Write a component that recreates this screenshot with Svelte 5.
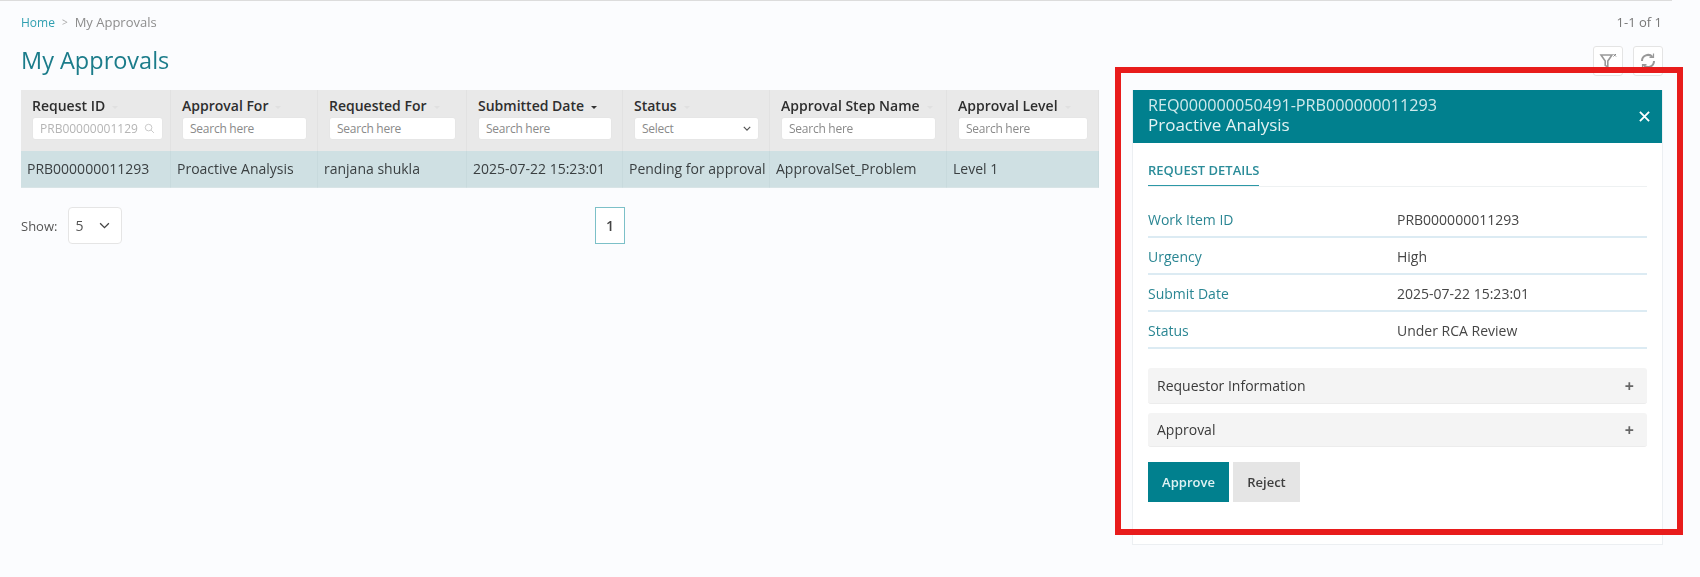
<script>
  const columns = [
    { title: 'Request ID', w: 150, value: 'PRB000000011293', kind: 'filled' },
    { title: 'Approval For', w: 147, value: 'Proactive Analysis', kind: 'search' },
    { title: 'Requested For', w: 149, value: 'ranjana shukla', kind: 'search' },
    { title: 'Submitted Date', w: 156, value: '2025-07-22 15:23:01', kind: 'search', sorted: true },
    { title: 'Status', w: 147, value: 'Pending for approval', kind: 'select' },
    { title: 'Approval Step Name', w: 177, value: 'ApprovalSet_Problem', kind: 'search' },
    { title: 'Approval Level', w: 152, value: 'Level 1', kind: 'search' }
  ];
  const details = [
    ['Work Item ID', 'PRB000000011293'],
    ['Urgency', 'High'],
    ['Submit Date', '2025-07-22 15:23:01'],
    ['Status', 'Under RCA Review']
  ];
</script>

<div class="page">
  <div class="topline"></div>
  <div class="layout">
    <main class="left">
      <nav class="crumbs"><a href="#home">Home</a><span class="sep">&gt;</span><span>My Approvals</span></nav>
      <h1>My Approvals</h1>
      <div class="table">
        {#each columns as c}
          <div class="head" style="width:{c.w}px">
            <div class="title">{c.title}<span class="caret" class:on={c.sorted}></span></div>
            {#if c.kind === 'filled'}
              <div class="field filled"><span>PRB00000001129</span>
                <svg viewBox="0 0 12 12" width="11" height="11"><circle cx="5" cy="5" r="3.6" fill="none" stroke="#c4c4c4"/><path d="M7.8 7.8 10.8 10.8" stroke="#c4c4c4"/></svg>
              </div>
            {:else if c.kind === 'select'}
              <div class="field select"><span>Select</span>
                <svg viewBox="0 0 10 6" width="8" height="5"><path d="M1 1l4 4 4-4" fill="none" stroke="#555" stroke-width="1.5"/></svg>
              </div>
            {:else}
              <div class="field"><span>Search here</span></div>
            {/if}
          </div>
        {/each}
        {#each columns as c}
          <div class="cell" style="width:{c.w}px">{c.value}</div>
        {/each}
      </div>
      <div class="foot">
        <div class="show">
          <span>Show:</span>
          <div class="size"><span>5</span>
            <svg viewBox="0 0 12 8" width="11" height="7"><path d="M1 1.5l5 5 5-5" fill="none" stroke="#444" stroke-width="1.5"/></svg>
          </div>
        </div>
        <div class="page-one">1</div>
      </div>
    </main>

    <aside class="right">
      <div class="count">1-1 of 1</div>
      <div class="tools">
        <button class="tool" aria-label="Clear filter">
          <svg viewBox="0 0 20 20" width="20" height="20"><path d="M3 4h11l-4.2 6v6l-2.6-1.6V10z" fill="none" stroke="#999" stroke-width="1.6"/><path d="M15.5 3l2.5 2.5M18 3l-2.5 2.5" stroke="#888"/></svg>
        </button>
        <button class="tool" aria-label="Refresh">
          <svg viewBox="0 0 20 20" width="20" height="20"><path d="M4 10a6 6 0 0 1 10.5-4M16 10a6 6 0 0 1-10.5 4" fill="none" stroke="#999" stroke-width="2"/><path d="M15.5 2.5v4h-4M4.5 17.5v-4h4" fill="none" stroke="#999" stroke-width="1.2"/></svg>
        </button>
      </div>
      <section class="panel">
        <header class="panel-head">
          <div class="ids">
            <div class="id-line">REQ000000050491-PRB000000011293</div>
            <div class="name-line">Proactive Analysis</div>
          </div>
          <svg class="close" viewBox="0 0 12 12" width="11" height="11"><path d="M1 1l10 10M11 1 1 11" stroke="#fff" stroke-width="2"/></svg>
        </header>
        <div class="panel-body">
          <div class="tabs"><span class="tab">REQUEST DETAILS</span></div>
          <div class="details">
            {#each details as d}
              <div class="row"><span class="k">{d[0]}</span><span class="v">{d[1]}</span></div>
            {/each}
          </div>
          <div class="acc first"><span>Requestor Information</span><b>+</b></div>
          <div class="acc second"><span>Approval</span><b>+</b></div>
          <div class="actions">
            <button class="approve">Approve</button>
            <button class="reject">Reject</button>
          </div>
        </div>
      </section>
    </aside>
  </div>
  <div class="highlight"></div>
</div>

<style>
  :global(body) { margin: 0; background: #fbfcfe; }
  .page {
    position: relative;
    width: 1700px;
    height: 577px;
    overflow: hidden;
    background: #fbfcfe;
    font-family: "Open Sans", "Noto Sans", sans-serif;
    font-size: 14px;
    color: #3b3b3b;
  }
  .topline { height: 1px; width: 1672px; background: #dcdcdc; }
  .layout { display: flex; padding-left: 21px; filter: blur(0.4px); }
  .left { width: 1079px; }
  .crumbs { display: flex; align-items: center; gap: 7px; height: 18px; margin-top: 12px; font-size: 13px; color: #8d8d8d; }
  .crumbs a { color: #2f9fb0; text-decoration: none; font-size: 12px; }
  .sep { font-size: 10px; color: #aaa; }
  h1 { margin: 14px 0 0; height: 45px; font-size: 23.5px; line-height: 30px; font-weight: 500; color: #1b7c8a; }
  .table { display: flex; flex-wrap: wrap; width: 1079px; }
  .head {
    box-sizing: border-box;
    height: 61px;
    padding: 6px 10px 0 11px;
    background: #e9e9e9;
    border-right: 1px solid #e2e2e2;
  }
  .title { height: 21px; line-height: 20px; font-weight: 600; color: #2e2e2e; white-space: nowrap; }
  .caret { display: inline-block; margin-left: 7px; vertical-align: 2px; border: 3.5px solid transparent; border-top-color: #e0e0e0; border-bottom: 0; }
  .caret.on { border-top-color: #333; }
  .field {
    box-sizing: border-box;
    display: flex;
    align-items: center;
    justify-content: space-between;
    height: 23px;
    padding: 0 7px;
    background: #fff;
    border: 1px solid #e6e6e6;
    border-radius: 3px;
    font-size: 12px;
    letter-spacing: -0.25px;
    color: #8a8a8a;
    white-space: nowrap;
  }
  .filled { color: #b5b5b5; letter-spacing: 0; margin-right: -3px; }
  .cell {
    box-sizing: border-box;
    height: 37px;
    line-height: 36px;
    padding-left: 6px;
    background: #cfe0e3;
    border-right: 1px solid #c8dadd;
    border-bottom: 1px solid #d8e4e6;
    color: #3a3f41;
    white-space: nowrap;
  }
  .foot { display: flex; align-items: center; height: 37px; margin-top: 19px; }
  .show { display: flex; align-items: center; gap: 11px; font-size: 13px; color: #555; width: 574px; }
  .size {
    box-sizing: border-box;
    display: flex;
    align-items: center;
    justify-content: space-between;
    width: 54px;
    height: 37px;
    padding: 0 11px 0 6px;
    background: #fff;
    border: 1px solid #e5e5e5;
    border-radius: 4px;
    font-size: 14px;
  }
  .page-one {
    box-sizing: border-box;
    width: 30px;
    height: 37px;
    line-height: 35px;
    text-align: center;
    background: #fff;
    border: 1px solid #7cc0c8;
    font-weight: 600;
    color: #444;
  }
  .right { width: 531px; margin-left: 32px; }
  .count { height: 18px; margin-top: 12px; padding-right: 1px; text-align: right; font-size: 13px; line-height: 18px; color: #777; }
  .tools { display: flex; justify-content: flex-end; gap: 10px; margin-top: 15px; height: 44px; }
  .tool {
    box-sizing: border-box;
    display: flex;
    align-items: center;
    justify-content: center;
    width: 30px;
    height: 30px;
    padding: 0;
    background: #fff;
    border: 1px solid #e4e4e4;
    border-radius: 3px;
  }
  .panel { background: #fff; border: 1px solid #eceff2; border-top: 0; height: 455px; box-sizing: border-box; }
  .panel-head {
    display: flex;
    align-items: center;
    justify-content: space-between;
    box-sizing: border-box;
    height: 53px;
    padding: 0 12px 4px 15px;
    background: #01808e;
    color: #e4f3f4;
    line-height: 20px;
  }
  .id-line { font-size: 16.2px; color: #cfe9ec; }
  .name-line { font-size: 17px; }
  .close { margin-top: 4px; }
  .panel-body { padding: 0 15px; }
  .tabs { height: 43px; border-bottom: 1px solid #eef1f2; display: flex; }
  .tab { display: block; height: 43px; line-height: 54px; box-sizing: border-box; border-bottom: 1px solid #2c98a6; font-size: 13px; font-weight: 600; color: #2b8c99; margin-bottom: -1px; }
  .details { margin-top: 14px; }
  .row { display: flex; height: 37px; line-height: 38px; box-sizing: border-box; border-bottom: 2px solid #dcebf3; }
  .k { width: 249px; color: #2a8693; }
  .v { color: #464646; }
  .acc {
    box-sizing: border-box;
    display: flex;
    align-items: center;
    justify-content: space-between;
    padding: 0 13px 0 9px;
    background: #f4f4f4;
    border-bottom: 1px solid #ececec;
    border-radius: 3px;
    color: #3a3a3a;
    font-size: 14px;
  }
  .acc b { color: #666; font-size: 16px; line-height: 16px; }
  .first { height: 36px; margin-top: 19px; }
  .second { height: 34px; margin-top: 9px; }
  .actions { display: flex; gap: 4px; margin-top: 15px; }
  button { font-family: inherit; }
  .approve, .reject { height: 40px; border: 0; font-size: 13px; font-weight: 600; padding: 0; }
  .approve { width: 81px; background: #01808e; color: #dff2f3; }
  .reject { width: 67px; background: #e5e5e5; color: #3f3f3f; }
  .highlight {
    position: absolute;
    box-sizing: border-box;
    left: 1115px;
    top: 67px;
    width: 568px;
    height: 468px;
    border: 6px solid #e81c1c;
    pointer-events: none;
  }
</style>
